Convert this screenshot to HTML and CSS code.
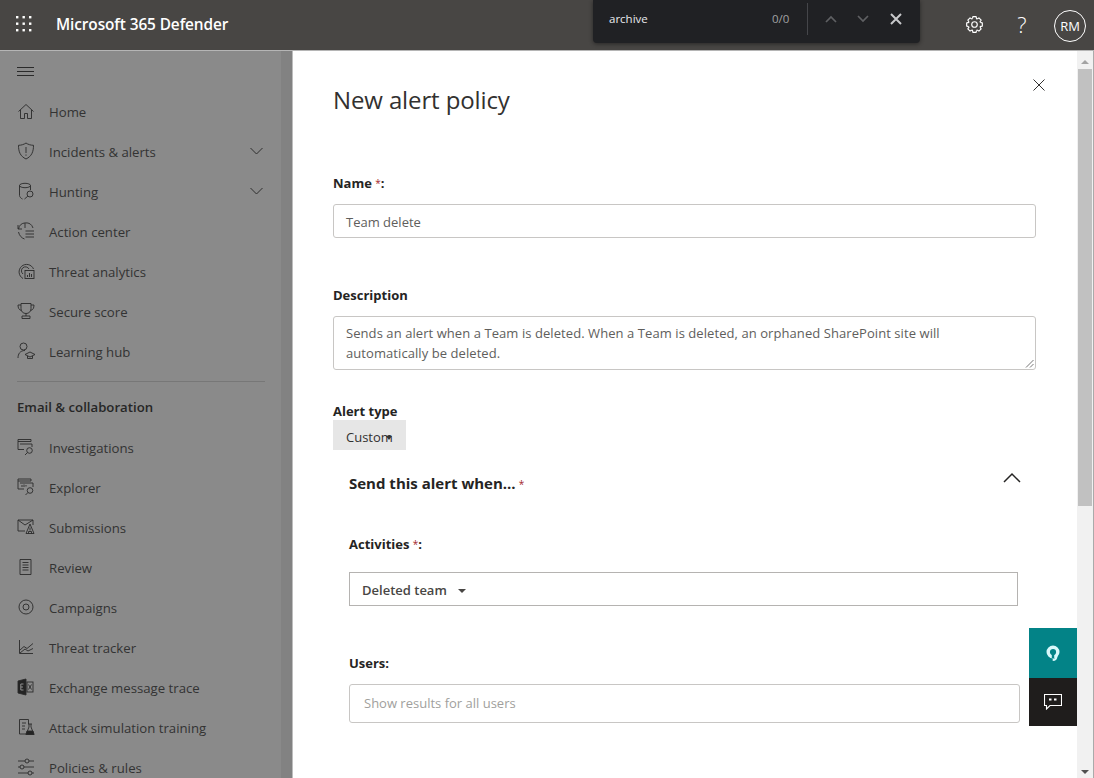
FILE: index.html
```html
<!DOCTYPE html>
<html lang="en">
<head>
<meta charset="utf-8">
<title>Microsoft 365 Defender</title>
<link rel="stylesheet" href="styles.css">
</head>
<body>
<header class="topbar">
  <svg class="waffle" width="18" height="16" viewBox="0 0 18 16" fill="#fff"><g><rect x="1" y="0" width="2.4" height="2.4"/><rect x="7.5" y="0" width="2.4" height="2.4"/><rect x="14" y="0" width="2.4" height="2.4"/><rect x="1" y="6.5" width="2.4" height="2.4"/><rect x="7.5" y="6.5" width="2.4" height="2.4"/><rect x="14" y="6.5" width="2.4" height="2.4"/><rect x="1" y="13" width="2.4" height="2.4"/><rect x="7.5" y="13" width="2.4" height="2.4"/><rect x="14" y="13" width="2.4" height="2.4"/></g></svg>
  <div class="brand">Microsoft 365 Defender</div>
  <div class="top-actions">
    <svg class="top-icon" width="17" height="17" viewBox="0 0 16 16" fill="none" stroke="#fff" stroke-width="1.1">
      <defs><path id="tooth" d="M13.45 6.02L15.36 6.57V9.43L13.45 9.98L13.26 10.45"/></defs>
      <use href="#tooth"/><use href="#tooth" transform="rotate(45 8 8)"/><use href="#tooth" transform="rotate(90 8 8)"/><use href="#tooth" transform="rotate(135 8 8)"/><use href="#tooth" transform="rotate(180 8 8)"/><use href="#tooth" transform="rotate(225 8 8)"/><use href="#tooth" transform="rotate(270 8 8)"/><use href="#tooth" transform="rotate(315 8 8)"/>
      <circle cx="8" cy="8" r="2.6"/>
    </svg>
    <span class="help">?</span>
    <span class="avatar">RM</span>
  </div>
</header>

<div class="findbar">
  <span class="find-term">archive</span>
  <span class="find-count">0/0</span>
  <span class="find-sep"></span>
  <svg class="find-arrow" width="12" height="8" viewBox="0 0 12 8" fill="none" stroke="#5f6063" stroke-width="1.700"><path d="M1 7l5-5 5 5"/></svg>
  <svg class="find-arrow" width="12" height="8" viewBox="0 0 12 8" fill="none" stroke="#5f6063" stroke-width="1.700"><path d="M1 1l5 5 5-5"/></svg>
  <svg class="find-close" width="12" height="12" viewBox="0 0 12 12" fill="none" stroke="#c8c9cb" stroke-width="2"><path d="M1 1l10 10M11 1L1 11"/></svg>
</div>

<div class="main">
  <nav class="nav">
    <svg class="burger" width="17" height="10" viewBox="0 0 17 10" stroke="#2a2a2a" stroke-width="1"><path d="M0 .5h17M0 4.500h17M0 8.500h17"/></svg>
    <ul class="nav-list first">
      <li class="nav-item"><svg class="ni" viewBox="0 0 18 18"><path d="M1.500 9.500L9 2.500l7.500 7M3.500 8v8.500h4v-5h3v5h4V8"/></svg><span>Home</span></li>
      <li class="nav-item"><svg class="ni" viewBox="0 0 18 18"><path d="M9 1c2 1.500 5 2.300 7.500 2.300 0 6.500-1.800 11-7.500 13.700C3.300 14.300 1.500 9.800 1.500 3.300 4 3.300 7 2.500 9 1zM9 5v6M9 12.500v1.200"/></svg><span>Incidents &amp; alerts</span><svg class="chev" width="13" height="8" viewBox="0 0 13 8"><path d="M.5 1l6 6 6-6"/></svg></li>
      <li class="nav-item"><svg class="ni" viewBox="0 0 18 18"><ellipse cx="8" cy="3.500" rx="5.500" ry="2.200"/><path d="M2.500 3.500v10c0 1.200 1.500 3 3 3.500M13.500 3.500V8"/><circle cx="13" cy="12" r="3"/><path d="M10.800 14.200L7.500 17"/></svg><span>Hunting</span><svg class="chev" width="13" height="8" viewBox="0 0 13 8"><path d="M.5 1l6 6 6-6"/></svg></li>
      <li class="nav-item"><svg class="ni" viewBox="0 0 18 18"><path d="M1.500 7A7.500 7.500 0 0 1 16 6M1 3v4h4M1.500 10c.8 3.500 3 6 6 7M8 1v5M8.500 9h8.500M8.500 12h8.500M8.500 15h8.500"/></svg><span>Action center</span></li>
      <li class="nav-item"><svg class="ni" viewBox="0 0 18 18"><path d="M6 16.500A7.500 7.500 0 1 1 16.500 7M6 12a4 4 0 1 1 6-5"/><rect x="8" y="8.500" width="9" height="8"/><path d="M10.500 15v-2M12.500 15v-4M14.500 15v-3"/></svg><span>Threat analytics</span></li>
      <li class="nav-item"><svg class="ni" viewBox="0 0 18 18"><path d="M4 1.500h10v5c0 3-2 5-5 5s-5-2-5-5zM4 3H1c0 3 1 5 3.500 5.500M14 3h3c0 3-1 5-3.500 5.500M9 11.500V14M5 14h8v2.500H5z"/></svg><span>Secure score</span></li>
      <li class="nav-item"><svg class="ni" viewBox="0 0 18 18"><circle cx="6.500" cy="4.500" r="3.500"/><path d="M1 16c0-4 2-7.500 7-7.500M8 12.500l5-2.500 5 2.500-5 2.500zM10.500 14v2.500h5V14"/></svg><span>Learning hub</span></li>
    </ul>
    <div class="nav-divider"></div>
    <div class="nav-heading">Email &amp; collaboration</div>
    <ul class="nav-list">
      <li class="nav-item"><svg class="ni" viewBox="0 0 18 18"><path d="M1 1.500h13v2H1zM1 3.500v8h6M3 6h12v3"/><circle cx="12.500" cy="12.500" r="2.800"/><path d="M10.500 14.500l-2.500 2.500"/></svg><span>Investigations</span></li>
      <li class="nav-item"><svg class="ni" viewBox="0 0 18 18"><path d="M1 1h13v2H1zM1 3v8h6M3 5h13v4M5 9V7M7 9V6.500M9 8.500V7"/><circle cx="13" cy="12.500" r="2.800"/><path d="M11 14.500L8.500 17"/></svg><span>Explorer</span></li>
      <li class="nav-item"><svg class="ni" viewBox="0 0 18 18"><path d="M1 2h15v5M1 2v11h7M1 2l7 5 8-5M13 6l-4 9.500h8zM13 9.500v3M11.500 15.500v-2h3v2"/></svg><span>Submissions</span></li>
      <li class="nav-item"><svg class="ni" viewBox="0 0 18 18"><path d="M3 1.500h11v15H3zM5.500 4.500h6M5.500 7h6M5.500 9.500h6M5.500 12h6"/></svg><span>Review</span></li>
      <li class="nav-item"><svg class="ni" viewBox="0 0 18 18"><circle cx="9" cy="9" r="7"/><circle cx="9" cy="9" r="3"/></svg><span>Campaigns</span></li>
      <li class="nav-item"><svg class="ni" viewBox="0 0 18 18"><path d="M2.500 2v13.500H16M3 12l4-3.500 3 2 6-5M3 15l5-4 3 2 5-2.500"/></svg><span>Threat tracker</span></li>
      <li class="nav-item"><svg class="ni ni-ex" viewBox="0 0 18 18"><path class="ex-fill" d="M1 3l8-2v16l-8-2z"/><path class="ex-letter" d="M6.500 6H3.800v6h2.700M3.800 9h2.200"/><rect x="10" y="4" width="6" height="10"/><path d="M11.500 6.500l3 5M14.500 6.500l-3 5"/></svg><span>Exchange message trace</span></li>
      <li class="nav-item"><svg class="ni" viewBox="0 0 18 18"><path d="M9 16H2.500V1.500h9V6M5 5h4M5 8h3M5 11h3M12 6v3l-3 7.500h8L14 9V6M11 6h4"/><path class="ex-fill" d="M10 13h6l1 3.500H9z"/></svg><span>Attack simulation training</span></li>
      <li class="nav-item"><svg class="ni" viewBox="0 0 18 18"><path d="M1 3h16M1 9h16M1 15h16"/><circle class="knob" cx="10" cy="3" r="2"/><circle class="knob" cx="5" cy="9" r="2"/><circle class="knob" cx="13" cy="15" r="2"/></svg><span>Policies &amp; rules</span></li>
    </ul>
  </nav>
  <div class="gutter"></div>

  <main class="panel">
    <div class="panel-body">
      <div class="title-row">
        <h1 class="title">New alert policy</h1>
        <svg class="close" width="12" height="12" viewBox="0 0 12 12" stroke="#323130" stroke-width="1" fill="none"><path d="M.5.500l11 11M11.500.500l-11 11"/></svg>
      </div>
      <label class="label name-label">Name <span class="req">*</span>:</label>
      <div class="field name-field">Team delete</div>
      <label class="label desc-label">Description</label>
      <div class="field area">Sends an alert when a Team is deleted. When a Team is deleted, an orphaned SharePoint site will automatically be deleted.
        <svg class="grip" width="9" height="9" viewBox="0 0 9 9" stroke="#777" stroke-width="1"><path d="M8.500 1L1 8.500M8.500 5L5 8.500"/></svg>
      </div>
      <label class="label type-label">Alert type</label>
      <div class="custom">Custom<span class="mini-caret"></span></div>
      <section class="send">
        <div class="send-head">
          <h2 class="send-title">Send this alert when...<span class="req small">*</span></h2>
          <svg class="collapse" width="18" height="11" viewBox="0 0 18 11" fill="none" stroke="#252423" stroke-width="1.500"><path d="M1 10l8-8 8 8"/></svg>
        </div>
        <label class="label act-label">Activities <span class="req">*</span>:</label>
        <div class="select">Deleted team<span class="caret"></span></div>
        <label class="label users-label">Users:</label>
        <div class="users">Show results for all users</div>
      </section>
    </div>
  </main>

  <div class="scrollbar">
    <span class="sb-up"></span>
    <span class="sb-thumb"></span>
    <span class="sb-down"></span>
  </div>

  <div class="fabs">
    <button class="fab fab-teal" aria-label="Help">
      <svg width="14" height="17" viewBox="0 0 14 17" fill="none"><circle cx="7" cy="7" r="4.800" stroke="#d8f8fa" stroke-width="3.400"/><rect x="5.800" y="6" width="2.400" height="7" fill="#038387"/><path d="M10.500 11c0 2.500-1.500 4-3.800 4" stroke="#d8f8fa" stroke-width="2"/></svg>
    </button>
    <button class="fab fab-dark" aria-label="Feedback">
      <svg width="18" height="16" viewBox="0 0 18 16" fill="none" stroke="#fff" stroke-width="1.100"><path d="M.5.500h17v11H6l-3.500 3.500v-3.500h-2z"/><rect x="5" y="4.500" width="2.500" height="2" fill="#fff" stroke="none"/><rect x="10" y="4.500" width="2.500" height="2" fill="#fff" stroke="none"/></svg>
    </button>
  </div>
</div>
</body>
</html>
```
FILE: styles.css
```css
* { box-sizing: border-box; }
html, body { margin: 0; height: 100%; }
body {
  width: 1094px; height: 778px; overflow: hidden; position: relative;
  display: flex; flex-direction: column;
  font-family: "Open Sans", "Noto Sans", "Liberation Sans", sans-serif;
  font-size: 13px; color: #323130; background: #fff;
}
ul { list-style: none; margin: 0; padding: 0; }

.topbar {
  height: 51px; flex: none; display: flex; align-items: center;
  background: #484644; color: #fff; border-bottom: 1px solid #b5b5b5;
}
.waffle { margin-left: 15px; flex: none; margin-top: -2px; }
.brand { margin-left: 23px; font-size: 15.400px; font-weight: 600; letter-spacing: -.1px; margin-top: -2px; }
.top-actions { margin-left: auto; display: flex; align-items: center; margin-right: 8px; }
.top-icon { display: block; margin-right: 31px; margin-top: -2px; }
.help { font-size: 22px; width: 16px; text-align: center; margin-right: 24px; font-weight: 300; margin-top: -3px; }
.avatar {
  width: 32px; height: 32px; border: 1px solid #fff; border-radius: 50%;
  display: flex; align-items: center; justify-content: center; font-size: 13px; font-weight: 500; margin-top: 2px;
}

.findbar {
  position: absolute; left: 593px; top: 0; width: 327px; height: 43px;
  background: #202124; border-radius: 0 0 4px 4px;
  box-shadow: 0 1px 4px rgba(0,0,0,.45);
  display: flex; align-items: center; color: #e8eaed; font-size: 11.500px;
}
.find-term { margin-left: 16px; width: 163px; margin-top: -7px; }
.find-count { color: #a0a1a3; width: 21px; margin-top: -7px; }
.find-sep { width: 1px; height: 32px; background: #45464a; margin: -6px 17px 0 14px; }
.find-arrow { margin-right: 20px; flex: none; margin-top: -5px; }
.find-close { flex: none; margin-top: -5px; margin-left: 1px; }

.main { flex: 1; min-height: 0; display: flex; position: relative; }
.nav {
  width: 281px; flex: none; background: #8a8a8a; color: #2b2b2b; overflow: hidden;
  padding-left: 17px;
}
.burger { display: block; margin-top: 16px; }
.nav-list.first { margin-top: 15px; }
.nav-item { height: 40px; display: flex; align-items: center; position: relative; font-size: 13.200px; color: #333; }
.ni {
  width: 18px; height: 18px; flex: none; margin-right: 14px; margin-top: -3px;
  fill: none; stroke: #2a2a2a; stroke-width: .9;
}
.ni .ex-fill { fill: #242424; }
.ni .ex-letter { stroke: #9a9a9a; }
.ni .knob { fill: #8a8a8a; }
.chev { position: absolute; left: 233px; top: 15px; fill: none; stroke: #2e2e2e; stroke-width: 1; }
.nav-divider { width: 248px; height: 1px; background: #777; margin-top: 9px; }
.nav-heading { font-size: 13.200px; font-weight: 600; color: #262626; height: 26px; line-height: 26px; margin-top: 12px; margin-bottom: 8px; }

.gutter { width: 12px; flex: none; background: #828282; border-right: 1px solid #bdbdbd; }
.panel { flex: 1; min-width: 0; background: #fff; overflow: hidden; }
.panel-body { padding: 0 41px 0 40px; }
.title-row { position: relative; height: 100px; }
.title { margin: 0; padding-top: 31px; font-size: 24px; font-weight: 500; line-height: 36px; color: #323130; letter-spacing: -.12px; }
.close { position: absolute; right: -9px; top: 28px; }

.label { display: block; font-weight: 700; font-size: 13px; line-height: 18px; color: #252423; }
.req { color: #a4262c; font-weight: 400; font-size: 10px; vertical-align: 1px; }
.req.small { margin-left: 3px; }
.name-label { margin-top: 23px; }
.field { border: 1px solid #c8c6c4; border-radius: 3px; padding: 0 12px; color: #605e5c; font-size: 13px; }
.name-field { height: 34px; line-height: 34px; margin-top: 12px; }
.desc-label { margin-top: 48px; }
.area { height: 54px; margin-top: 12px; padding: 6px 80px 0 12px; line-height: 20px; position: relative; letter-spacing: .07px; }
.grip { position: absolute; right: 1px; bottom: 1px; }
.type-label { margin-top: 32px; }
.custom {
  width: 73px; height: 30px; background: #e6e6e6; margin-top: 0; padding-left: 13px; line-height: 35px; position: relative; font-size: 13px;
}
.mini-caret { position: absolute; left: 53px; top: 16px; border: 3.500px solid transparent; border-top: 4px solid #333; border-bottom: 0; }
.send { padding-left: 16px; }
.send-head { display: flex; justify-content: space-between; position: relative; margin-top: 21px; height: 22px; }
.send-title { margin: 0; font-size: 15px; font-weight: 700; line-height: 24px; color: #252423; }
.collapse { margin-top: 1px; margin-right: 15px; }
.act-label { margin-top: 42px; }
.select {
  width: 669px; height: 34px; border: 1px solid #b5b3b1; margin-top: 19px; padding: 1px 0 0 12px; color: #484644; font-weight: 600; font-size: 13px; display: flex; align-items: center;
}
.caret { margin-left: 11px; border: 4px solid transparent; border-top: 4px solid #484644; border-bottom: 0; margin-top: 2px; }
.users-label { margin-top: 48px; }
.users {
  width: 671px; height: 39px; border: 1px solid #c8c6c4; border-radius: 3px; margin-top: 12px; padding-left: 14px; line-height: 37px; color: #a19f9d;
}

.scrollbar {
  width: 17px; flex: none; background: #f1f1f1; border-right: 1px solid #aaa; position: relative;
}
.sb-up { position: absolute; left: 4px; top: 9px; border: 4px solid transparent; border-bottom: 4px solid #a3a3a3; border-top: 0; }
.sb-thumb { position: absolute; left: 1px; top: 18px; width: 14px; height: 437px; background: #c1c1c1; }
.sb-down { position: absolute; left: 4px; bottom: 4px; border: 4px solid transparent; border-top: 4px solid #505050; border-bottom: 0; }

.fabs { position: absolute; left: 1029px; top: 577px; width: 48px; }
.fab { display: flex; align-items: center; justify-content: center; width: 48px; border: 0; padding: 0; }
.fab-teal { height: 50px; background: #038387; }
.fab-dark { height: 48px; background: #1f1d1c; }
```
